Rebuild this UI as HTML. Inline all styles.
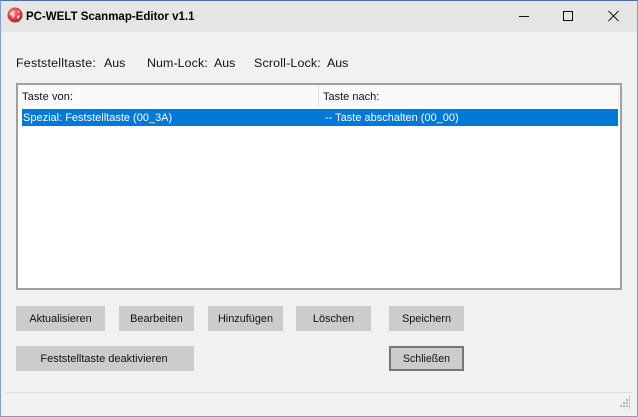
<!DOCTYPE html>
<html><head><meta charset="utf-8"><style>
html,body{margin:0;padding:0}
body{width:638px;height:417px;overflow:hidden;position:relative;background:#f1f1f1;font-family:"Liberation Sans",sans-serif;font-size:11px;color:#111}
div{position:absolute;box-sizing:border-box}
.t{white-space:nowrap;line-height:14px;height:14px}
.l{top:56px;font-size:12.4px}
.b{background:#cccccc;text-align:center;line-height:27px;height:25px;top:306px;white-space:nowrap;font-size:10.9px}
</style></head><body>
<div style="left:0;top:0;width:638px;height:417px;border:1px solid #7f9fd0;border-top-color:#4a6ea8;border-bottom-color:#7f9fd0"></div>
<div style="left:1px;top:1px;width:636px;height:31px;background:#e5e5e5"></div>
<svg style="position:absolute;left:7px;top:7px" width="16" height="16" viewBox="0 0 16 16"><defs><radialGradient id="g" cx="0.4" cy="0.35" r="0.7"><stop offset="0" stop-color="#f08a8a"/><stop offset="0.6" stop-color="#d83a42"/><stop offset="1" stop-color="#a81c28"/></radialGradient></defs><circle cx="8" cy="8" r="7.5" fill="url(#g)"/><path d="M2.5 6l3-2.5 2.5 .5-1 2.5 1 2-2 3-1-2.5-2-1zM10 2.5l3 2.5-2 1zM10 9l3.5-1-1.5 3-2 1z" fill="#f8caca"/></svg>
<div class="t" style="left:26px;top:10px;font-weight:bold;font-size:11.5px;color:#000;letter-spacing:0">PC-WELT Scanmap-Editor v1.1</div>
<svg style="position:absolute;left:510px;top:8px" width="120" height="16" viewBox="0 0 120 16" fill="none" stroke="#111" stroke-width="1"><path d="M9 8.5h10"/><rect x="53.5" y="3.5" width="9" height="9"/><path d="M98.5 3l10 10M108.5 3l-10 10"/></svg>
<div class="t l" style="left:16px;letter-spacing:.24px">Feststelltaste:</div>
<div class="t l" style="left:104px">Aus</div>
<div class="t l" style="left:147px;letter-spacing:.1px">Num-Lock:</div>
<div class="t l" style="left:214px">Aus</div>
<div class="t l" style="left:254px;letter-spacing:.18px">Scroll-Lock:</div>
<div class="t l" style="left:327px">Aus</div>
<div style="left:16px;top:83px;width:606px;height:207px;border:2px solid #a0a0a0;background:#fff"></div>
<div style="left:18px;top:85px;width:600px;height:23px;background:#fafafa"></div>
<div style="left:318px;top:85px;width:1px;height:23px;background:#e5e5e5"></div>
<div style="left:618px;top:85px;width:1px;height:23px;background:#e5e5e5"></div>
<div class="t" style="left:22px;top:90px;letter-spacing:.1px">Taste von:</div>
<div class="t" style="left:323px;top:90px">Taste nach:</div>
<div style="left:22px;top:109px;width:596px;height:17px;background:#0078d7"></div>
<div class="t" style="left:23px;top:111px;color:#fff">Spezial: Feststelltaste (00_3A)</div>
<div class="t" style="left:325px;top:111px;color:#fff">-- Taste abschalten (00_00)</div>
<div class="b" style="left:16px;width:89px">Aktualisieren</div>
<div class="b" style="left:119px;width:75px">Bearbeiten</div>
<div class="b" style="left:208px;width:75px">Hinzufügen</div>
<div class="b" style="left:296px;width:75px">Löschen</div>
<div class="b" style="left:389px;width:75px">Speichern</div>
<div class="b" style="left:14px;top:346px;width:180px;background:linear-gradient(#ccc,#ccc) 2px 0/178px 25px no-repeat;font-size:11px">Feststelltaste deaktivieren</div>
<div class="b" style="left:389px;top:346px;width:75px;border:2px solid #777;line-height:23px;font-size:10.6px">Schließen</div>
<div style="left:6px;top:392px;width:626px;height:1px;background:#dcdcdc"></div>
<div style="left:629px;top:396px;width:1px;height:13px;background:#c8c8c8"></div>
<svg style="position:absolute;left:620px;top:399px" width="9" height="10" fill="#b4b4b4"><rect x="6" y="0" width="2" height="2"/><rect x="3" y="3" width="2" height="2"/><rect x="6" y="3" width="2" height="2"/><rect x="0" y="6" width="2" height="2"/><rect x="3" y="6" width="2" height="2"/><rect x="6" y="6" width="2" height="2"/></svg>
</body></html>
